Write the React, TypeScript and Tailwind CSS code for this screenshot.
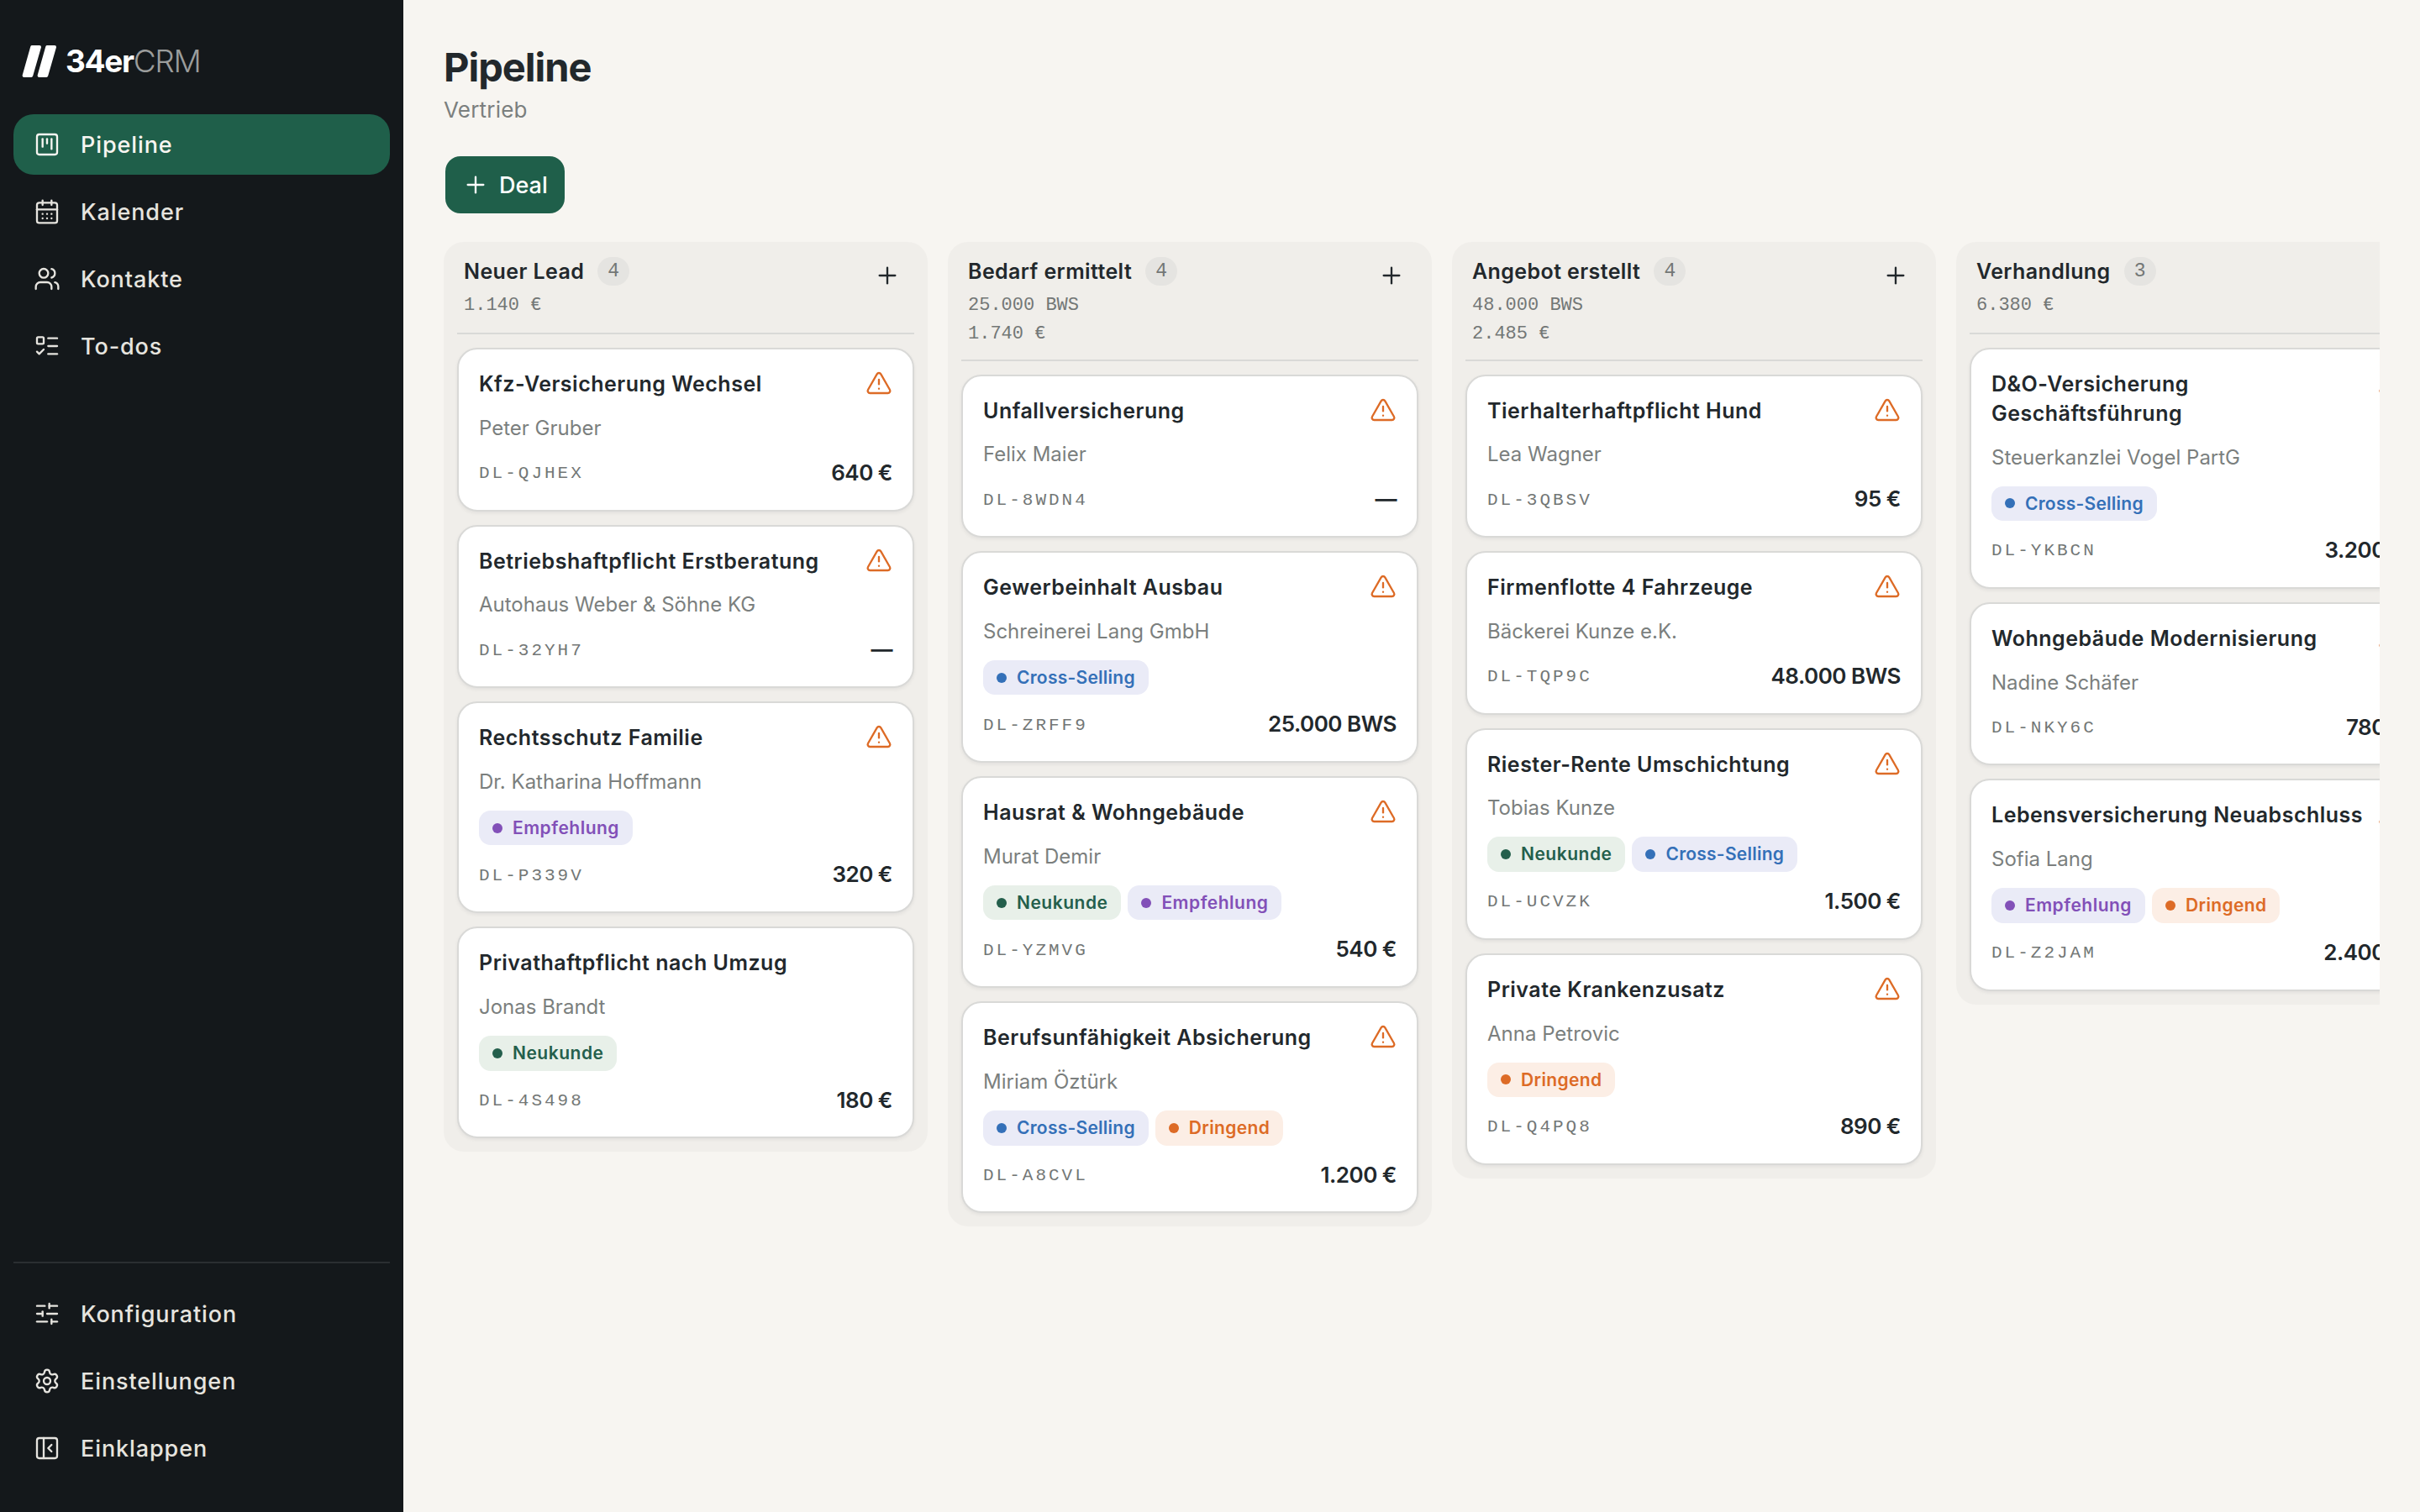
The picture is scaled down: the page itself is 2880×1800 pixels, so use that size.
import {
  CalendarDays,
  ListTodo,
  PanelLeftClose,
  Plus,
  Settings,
  SlidersHorizontal,
  SquareKanban,
  TriangleAlert,
  Users,
  type LucideIcon,
} from 'lucide-react';

type TagName = 'Neukunde' | 'Empfehlung' | 'Cross-Selling' | 'Dringend';

interface Deal {
  title: string;
  contact: string;
  code: string;
  value: string;
  tags?: TagName[];
  ok?: boolean;
}

interface Stage {
  name: string;
  totals: string[];
  deals: Deal[];
}

const TAG_STYLES: Record<TagName, { box: string; dot: string }> = {
  Neukunde: { box: 'bg-[#e8f0e9] text-[#245f4c] tracking-[0.5px]', dot: 'bg-[#245f4c]' },
  Empfehlung: { box: 'bg-[#eaebf7] text-[#8250b8] tracking-[0.5px]', dot: 'bg-[#8250b8]' },
  'Cross-Selling': { box: 'bg-[#eaebf7] text-[#3470b8] tracking-[0.25px]', dot: 'bg-[#3470b8]' },
  Dringend: { box: 'bg-[#fceee5] text-[#dd6b26] tracking-[0.35px]', dot: 'bg-[#dd6b26]' },
};

const STAGES: Stage[] = [
  {
    name: 'Neuer Lead',
    totals: ['1.140 €'],
    deals: [
      { title: 'Kfz-Versicherung Wechsel', contact: 'Peter Gruber', code: 'DL-QJHEX', value: '640 €' },
      { title: 'Betriebshaftpflicht Erstberatung', contact: 'Autohaus Weber & Söhne KG', code: 'DL-32YH7', value: '—' },
      { title: 'Rechtsschutz Familie', contact: 'Dr. Katharina Hoffmann', code: 'DL-P339V', value: '320 €', tags: ['Empfehlung'] },
      { title: 'Privathaftpflicht nach Umzug', contact: 'Jonas Brandt', code: 'DL-4S498', value: '180 €', tags: ['Neukunde'], ok: true },
    ],
  },
  {
    name: 'Bedarf ermittelt',
    totals: ['25.000 BWS', '1.740 €'],
    deals: [
      { title: 'Unfallversicherung', contact: 'Felix Maier', code: 'DL-8WDN4', value: '—' },
      { title: 'Gewerbeinhalt Ausbau', contact: 'Schreinerei Lang GmbH', code: 'DL-ZRFF9', value: '25.000 BWS', tags: ['Cross-Selling'] },
      { title: 'Hausrat & Wohngebäude', contact: 'Murat Demir', code: 'DL-YZMVG', value: '540 €', tags: ['Neukunde', 'Empfehlung'] },
      { title: 'Berufsunfähigkeit Absicherung', contact: 'Miriam Öztürk', code: 'DL-A8CVL', value: '1.200 €', tags: ['Cross-Selling', 'Dringend'] },
    ],
  },
  {
    name: 'Angebot erstellt',
    totals: ['48.000 BWS', '2.485 €'],
    deals: [
      { title: 'Tierhalterhaftpflicht Hund', contact: 'Lea Wagner', code: 'DL-3QBSV', value: '95 €' },
      { title: 'Firmenflotte 4 Fahrzeuge', contact: 'Bäckerei Kunze e.K.', code: 'DL-TQP9C', value: '48.000 BWS' },
      { title: 'Riester-Rente Umschichtung', contact: 'Tobias Kunze', code: 'DL-UCVZK', value: '1.500 €', tags: ['Neukunde', 'Cross-Selling'] },
      { title: 'Private Krankenzusatz', contact: 'Anna Petrovic', code: 'DL-Q4PQ8', value: '890 €', tags: ['Dringend'] },
    ],
  },
  {
    name: 'Verhandlung',
    totals: ['6.380 €'],
    deals: [
      { title: 'D&O-Versicherung Geschäftsführung', contact: 'Steuerkanzlei Vogel PartG', code: 'DL-YKBCN', value: '3.200 €', tags: ['Cross-Selling'] },
      { title: 'Wohngebäude Modernisierung', contact: 'Nadine Schäfer', code: 'DL-NKY6C', value: '780 €' },
      { title: 'Lebensversicherung Neuabschluss', contact: 'Sofia Lang', code: 'DL-Z2JAM', value: '2.400 €', tags: ['Empfehlung', 'Dringend'] },
    ],
  },
];

function NavItem({ icon: Icon, label, active }: { icon: LucideIcon; label: string; active?: boolean }) {
  return (
    <a
      className={`flex h-[72px] items-center gap-6 rounded-3xl px-6 text-[27px] font-[450] tracking-[0.9px] ${
        active ? 'bg-[#1f5f4a] text-[#f7f5f1]' : 'text-[#e6e4df]'
      }`}
    >
      <Icon size={32} strokeWidth={1.75} />
      <span className="pt-0.5">{label}</span>
    </a>
  );
}

function Logo() {
  return (
    <div className="flex h-[38px] items-center gap-2.5 pl-2.5">
      <svg width="42" height="38" viewBox="0 0 42 38" fill="white" stroke="white" strokeWidth="4" strokeLinejoin="round">
        <path d="M12.2 2H21L11.2 36H2.6Z" />
        <path d="M30.2 2H39L29.2 36H20.6Z" />
      </svg>
      <span className="pb-0.5 text-[37px] leading-none text-white">
        <span className="font-bold tracking-[-1.3px]">34er</span>
        <span className="font-light tracking-[-1.4px] text-[#9b9d9c]">CRM</span>
      </span>
    </div>
  );
}

function Sidebar() {
  return (
    <aside className="flex w-[480px] shrink-0 flex-col bg-[#14181b] px-4 pt-[54px] pb-10">
      <Logo />
      <nav className="mt-11 flex flex-col gap-2">
        <NavItem icon={SquareKanban} label="Pipeline" active />
        <NavItem icon={CalendarDays} label="Kalender" />
        <NavItem icon={Users} label="Kontakte" />
        <NavItem icon={ListTodo} label="To-dos" />
      </nav>
      <div className="mt-auto flex flex-col gap-2 border-t-2 border-[#2a2e31] pt-6">
        <NavItem icon={SlidersHorizontal} label="Konfiguration" />
        <NavItem icon={Settings} label="Einstellungen" />
        <NavItem icon={PanelLeftClose} label="Einklappen" />
      </div>
    </aside>
  );
}

function Tag({ name }: { name: TagName }) {
  const style = TAG_STYLES[name];
  return (
    <span className={`flex h-[41.5px] items-center gap-3 rounded-[14px] px-4 text-[21px] font-semibold ${style.box}`}>
      <span className={`size-3 rounded-full ${style.dot}`} />
      {name}
    </span>
  );
}

function DealCard({ deal }: { deal: Deal }) {
  return (
    <article className="rounded-3xl border-2 border-[#d9d9d7] bg-white px-6 pt-6 pb-[27.3px] shadow-[0_2px_4px_rgba(20,24,27,0.06)]">
      <div className="flex items-start justify-between gap-3">
        <h3 className="text-[25px] leading-[34.8px] font-semibold tracking-[0.5px] text-[#22282c]">{deal.title}</h3>
        {!deal.ok && <TriangleAlert size={32} strokeWidth={1.75} className="shrink-0 text-[#dd6b26]" />}
      </div>
      <p className="mt-[17px] text-2xl leading-9 text-[#7b7f7e]">{deal.contact}</p>
      {deal.tags && (
        <div className="mt-4 flex gap-2">
          {deal.tags.map((tag) => (
            <Tag key={tag} name={tag} />
          ))}
        </div>
      )}
      <div className="mt-[17.5px] flex h-[34px] items-center justify-between">
        <span className="pt-[3px] font-['Liberation_Mono',monospace] text-[21px] tracking-[3px] text-[#737776]">{deal.code}</span>
        <span className="text-[26px] font-semibold tracking-[-0.5px] text-[#22282c]">{deal.value}</span>
      </div>
    </article>
  );
}

function StageColumn({ stage }: { stage: Stage }) {
  return (
    <section className="w-[576px] shrink-0 rounded-3xl bg-[#f0eeea] p-4">
      <header className="mb-4 flex min-h-[94px] items-start justify-between border-b-2 border-[#d9d9d7] px-2 pb-[13.5px]">
        <div>
          <div className="mt-0.5 flex h-[34px] items-center gap-4">
            <h2 className="pt-px text-[25px] font-semibold tracking-[0.4px] text-[#22282c]">{stage.name}</h2>
            <span className="flex h-[34px] w-[38px] items-center justify-center rounded-full bg-[#e5e4e1] font-['Liberation_Mono',monospace] text-[23px] text-[#737776]">
              {stage.deals.length}
            </span>
          </div>
          <div className="mt-[7px] font-['Liberation_Mono',monospace] text-[22px] leading-[33.5px] text-[#737776]">
            {stage.totals.map((total) => (
              <p key={total}>{total}</p>
            ))}
          </div>
        </div>
        <button className="flex size-12 items-center justify-center text-[#22282c]">
          <Plus size={32} strokeWidth={1.75} />
        </button>
      </header>
      <div className="flex flex-col gap-4">
        {stage.deals.map((deal) => (
          <DealCard key={deal.code} deal={deal} />
        ))}
      </div>
    </section>
  );
}

export default function App() {
  return (
    <div className="flex h-[1800px] w-[2880px] overflow-hidden bg-[#f7f5f1] font-['Inter',sans-serif]">
      <Sidebar />
      <main className="min-w-0 flex-1 p-12">
        <h1 className="text-[47px] leading-16 font-bold tracking-[-1px] text-[#22282c]">Pipeline</h1>
        <p className="text-[26px] leading-[38px] tracking-[0.2px] text-[#7b7f7e]">Vertrieb</p>
        <button className="mt-9 ml-0.5 flex h-[68px] items-center gap-3 rounded-[18px] bg-[#1f5f4a] px-5 text-[27px] font-medium text-white">
          <Plus size={32} strokeWidth={1.75} />
          <span className="pt-0.5">Deal</span>
        </button>
        <div className="mt-[34px] flex items-start gap-6 overflow-hidden">
          {STAGES.map((stage) => (
            <StageColumn key={stage.name} stage={stage} />
          ))}
        </div>
      </main>
    </div>
  );
}
